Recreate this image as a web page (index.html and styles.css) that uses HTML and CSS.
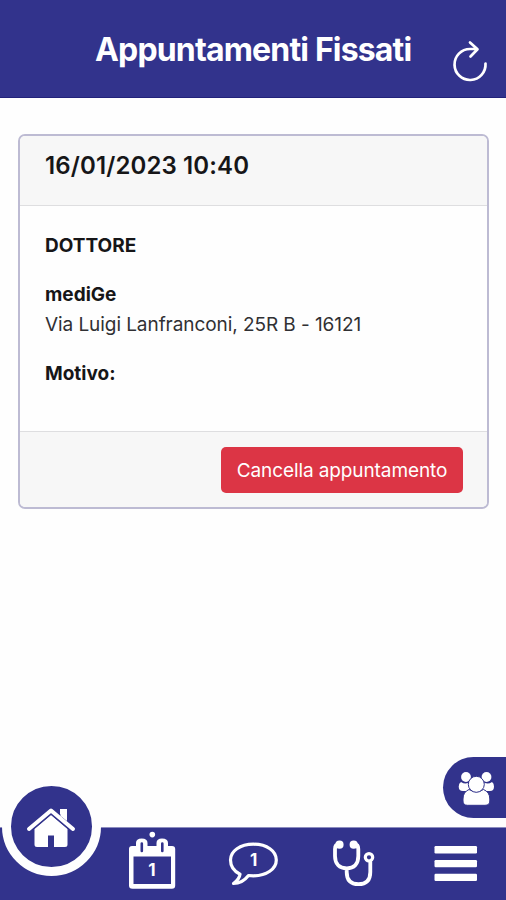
FILE: index.html
```html
<!DOCTYPE html>
<html lang="it">
<head>
<meta charset="utf-8">
<meta name="viewport" content="width=device-width, initial-scale=1">
<title>Appuntamenti Fissati</title>
<link rel="stylesheet" href="styles.css">
</head>
<body>
<div class="app">
  <header class="topbar">
    <h1 class="topbar-title"><span>Appuntamenti Fissati</span></h1>
    <button class="refresh" aria-label="Aggiorna">
      <svg width="38" height="46" viewBox="451 38 38 46" fill="none" stroke="#fff" stroke-width="2.7" stroke-linecap="round" stroke-linejoin="round">
        <path d="M485.5 63.5A15.5 15.5 0 1 1 470 49H477M470 42.4L477.500 49.300L470.500 56.500"/>
      </svg>
    </button>
  </header>
  <main class="content">
    <article class="card">
      <h2 class="card-header"><span>16/01/2023 10:40</span></h2>
      <div class="card-body">
        <p class="line strong"><span>DOTTORE</span></p>
        <div class="place">
          <p class="line strong"><span>mediGe</span></p>
          <p class="line address"><span>Via Luigi Lanfranconi, 25R B - 16121</span></p>
        </div>
        <p class="line strong"><span>Motivo:</span></p>
      </div>
      <footer class="card-footer">
        <button class="cancel"><span>Cancella appuntamento</span></button>
      </footer>
    </article>
  </main>
  <button class="group" aria-label="Famiglia">
    <svg width="36" height="36" viewBox="458 769 36 36" fill="#fff">
      <circle cx="466" cy="776" r="4.900"/><circle cx="486.500" cy="776" r="4.900"/>
      <path d="M461 781Q466.500 784.500 471 780V790H463Q458.700 790 458.700 785.500Q458.700 782 461 781ZM492 781Q487 784.500 482 780V790H490Q494 790 494 785.500Q494 782 492 781Z"/>
      <g stroke="#32338c" stroke-width="1">
        <path d="M469 788.500Q476.500 793 483.500 788.500Q489.800 791 489.800 798V800Q489.800 804.300 485 804.300H467.500Q463 804.300 463 800V798Q463 791 469 788.500Z"/>
        <circle cx="476.300" cy="783.300" r="8"/>
      </g>
    </svg>
  </button>
  <nav class="nav">
    <a class="nav-item home" aria-label="Home">
      <span class="home-disc">
        <svg width="50" height="42" viewBox="26 805 50 42">
          <path d="M51 814L67.500 828V843.500Q67.500 846 65 846H54V834.500H48V846H37Q34.500 846 34.500 843.500V828Z" fill="#fff"/>
          <path d="M60 808H67V823L60 817Z" fill="#fff"/>
          <path d="M29 828L51 809.500L73 828" fill="none" stroke="#32338c" stroke-width="6.500"/>
          <path d="M60.500 808H67V820L60.500 815Z" fill="#fff"/>
          <path d="M29 828L51 809.500L73 828" fill="none" stroke="#fff" stroke-width="4" stroke-linecap="round" stroke-linejoin="round"/>
        </svg>
      </span>
    </a>
    <a class="nav-item" aria-label="Appuntamenti">
      <svg width="100" height="72" viewBox="102 828 100 72">
        <circle cx="152.300" cy="834.600" r="2.800" fill="#fff"/>
        <path fill="#fff" fill-rule="evenodd" d="M132 846H136V843Q136 838.500 141.700 838.500Q147.500 838.500 147.500 843V846H156.500V843Q156.500 838.500 162 838.500Q168 838.500 168 843V846H172Q175.200 846 175.200 849V885.500Q175.200 888.800 172 888.800H132.500Q129 888.800 129 885.500V849Q129 846 132 846ZM133.500 856.500V884H171V856.500Z"/>
        <path d="M141.800 843.500V851M162.300 843.500V851" stroke="#32338c" stroke-width="2.600" stroke-linecap="round"/>
        <text class="nav-digit" x="152" y="876">1</text>
      </svg>
    </a>
    <a class="nav-item" aria-label="Messaggi">
      <svg width="101" height="72" viewBox="202 828 101 72">
        <path d="M240 874.200C233.500 871 230.500 865.500 230.500 860C230.500 851 240 844.200 253.500 844.200S276.300 851 276.300 860S266.500 875.800 253.500 875.800L248.500 875.500C245 880 240 883.500 233.500 883.500C237 881 239.500 878 240 874.200Z" fill="none" stroke="#fff" stroke-width="3.200" stroke-linejoin="round"/>
        <text class="nav-digit" x="253.600" y="866">1</text>
      </svg>
    </a>
    <a class="nav-item" aria-label="Medico">
      <svg width="101" height="72" viewBox="303 828 101 72" fill="none" stroke="#fff" stroke-width="3.800" stroke-linecap="round">
        <path d="M339 844.500Q335 844.500 335 849V856C335 864 339.500 868.300 346.800 868.300S358.300 864 358.300 856V849Q358.300 844.500 354.500 844.500M346.700 869V872C346.700 880 351 884.200 358.500 884.200S370.300 880 370.300 872V862"/>
        <circle cx="339.500" cy="844.700" r="2.200" fill="#fff"/><circle cx="353.700" cy="844.700" r="2.200" fill="#fff"/>
        <circle cx="369" cy="857.300" r="3.700" fill="#32338c" stroke-width="3.200"/>
      </svg>
    </a>
    <a class="nav-item" aria-label="Menu">
      <svg width="102" height="72" viewBox="404 828 102 72" fill="#fff">
        <rect x="434.500" y="846" width="42.500" height="7.400" rx="1.200"/>
        <rect x="434.500" y="860" width="42.500" height="7.200" rx="1.200"/>
        <rect x="434.500" y="873.800" width="42.500" height="7.200" rx="1.200"/>
      </svg>
    </a>
  </nav>
</div>
</body>
</html>
```

FILE: styles.css
```css
* { box-sizing: border-box; margin: 0; }

body {
  background: #fefefe;
  color: #161618;
  font-family: Inter, "Liberation Sans", sans-serif;
}

button { border: 0; padding: 0; font: inherit; }
svg { display: block; }
h1 span, h2 span, p span, .cancel span { white-space: nowrap; }

.app {
  height: 900px;
  display: flex;
  flex-direction: column;
  overflow: hidden;
}

.topbar {
  height: 98px;
  background: #32338c;
  border-bottom: 1px solid #22227a;
  display: grid;
  grid-template-columns: 95px 1fr 55px;
  color: #fff;
}
.topbar-title {
  grid-column: 2;
  padding-top: 30px;
  font-size: 32px;
  line-height: 40px;
  font-weight: 700;
  letter-spacing: -0.83px;
}
.refresh {
  align-self: start;
  width: 38px;
  padding-top: 38px;
  background: none;
}

.content { flex: 1; padding: 36px 17px 0 18px; }

.card {
  height: 375px;
  border: 2px solid #bdbbd3;
  border-radius: 7px;
  overflow: hidden;
  display: flex;
  flex-direction: column;
}
.card-header {
  height: 70px;
  padding: 14px 25px 0;
  background: #f7f7f7;
  border-bottom: 1px solid #dedee0;
  font-size: 24px;
  line-height: 32px;
  font-weight: 600;
  letter-spacing: 0.12px;
}
.card-body {
  flex: 1;
  padding: 25px 25px 0;
  display: flex;
  flex-direction: column;
  gap: 19px;
}
.line { font-size: 19px; line-height: 30px; font-weight: 400; color: #303033; }
.address { letter-spacing: -0.07px; }
.strong { font-weight: 700; color: #161618; }
.card-footer {
  height: 76px;
  padding: 15px 24px;
  background: #f7f7f7;
  border-top: 1px solid #dedee0;
  display: flex;
  justify-content: flex-end;
}
.cancel {
  width: 242px;
  height: 46px;
  padding-top: 2px;
  border-radius: 5px;
  background: #dc3545;
  color: #fff;
  font-size: 19px;
  line-height: 44px;
  letter-spacing: -0.1px;
}

.group {
  align-self: flex-end;
  width: 63px;
  height: 61px;
  margin-bottom: 9px;
  padding-left: 15px;
  border-radius: 31px 0 0 31px;
  background: #32338c;
}

.nav {
  height: 73px;
  background: #32338c;
  border-top: 1px solid #8c8cbf;
  display: grid;
  grid-template-columns: 102px 100px 101px 101px 102px;
}
.home { display: flex; justify-content: center; }
.home-disc {
  flex: none;
  width: 99px;
  height: 99px;
  margin-top: -51px;
  border: 9px solid #fefefe;
  border-radius: 50%;
  background: #32338c;
  display: flex;
  align-items: center;
  justify-content: center;
}
.nav-digit {
  font-size: 17px;
  font-weight: 700;
  fill: #fff;
  stroke: none;
  text-anchor: middle;
}
```
